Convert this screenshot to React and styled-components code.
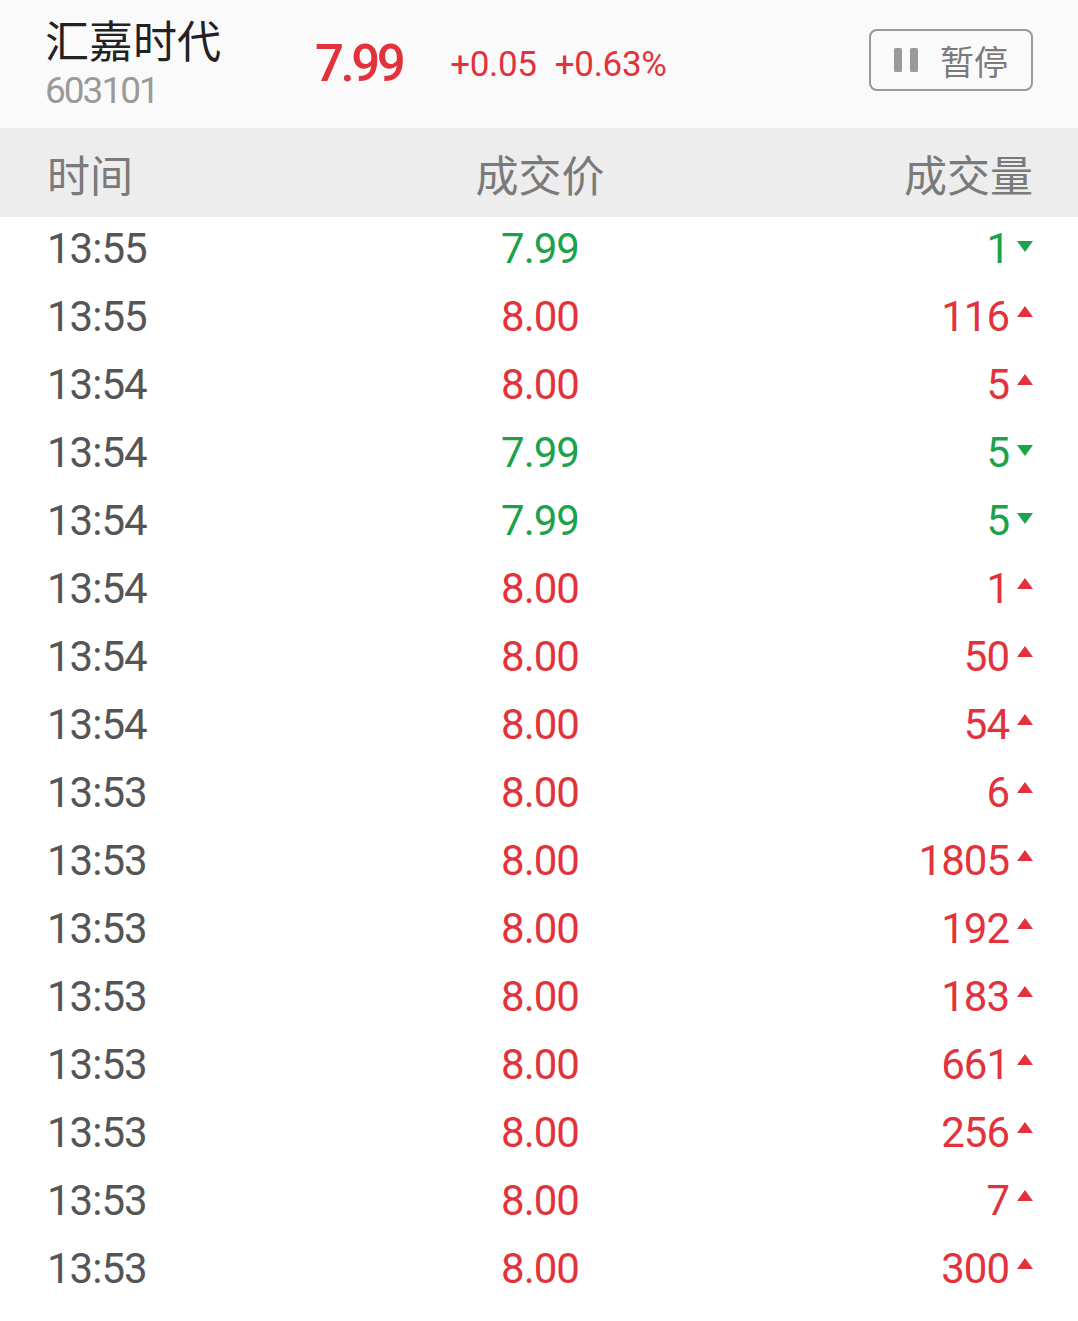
import React from "react";
import styled, { createGlobalStyle } from "styled-components";

const RED = "#e2333c";
const GREEN = "#1ca24b";

const GlobalStyle = createGlobalStyle`
  html, body {
    margin: 0;
    padding: 0;
    background: #ffffff;
    font-family: Roboto, "Noto Sans CJK SC", sans-serif;
  }
`;

const Page = styled.div`
  width: 1078px;
  height: 1321px;
  overflow: hidden;
  background: #ffffff;
`;

const Header = styled.div`
  height: 128px;
  background: #fafafa;
  display: flex;
  align-items: center;
  padding: 0 45px 0 45px;
  box-sizing: border-box;
`;

const NameBlock = styled.div`
  display: flex;
  flex-direction: column;
  width: 178px;
  margin-bottom: 4px;
`;

const Name = styled.div`
  font-family: "Noto Sans CJK SC", sans-serif;
  font-size: 44px;
  line-height: 52px;
  color: #222222;
`;

const Code = styled.div`
  font-size: 37px;
  line-height: 40px;
  color: #9a9a9a;
  letter-spacing: -2px;
  margin-top: 6px;
`;

const Price = styled.div`
  margin-left: 92px;
  font-size: 51px;
  font-weight: 500;
  letter-spacing: -3.5px;
  color: ${RED};
  margin-bottom: 2px;
`;

const Change = styled.div`
  margin-left: 48px;
  font-size: 35px;
  letter-spacing: -0.3px;
  color: ${RED};
  display: flex;
  gap: 18px;
`;

const PauseButton = styled.button`
  margin-left: auto;
  margin-bottom: 8px;
  width: 164px;
  height: 62px;
  box-sizing: border-box;
  border: 2.5px solid #9a9a9a;
  border-radius: 8px;
  background: transparent;
  display: flex;
  align-items: center;
  justify-content: center;
  gap: 22px;
  padding: 0;
  font-family: "Noto Sans CJK SC", sans-serif;
  font-size: 34px;
  color: #7a7a7a;
`;

const PauseIcon = () => (
  <svg width="24" height="24" viewBox="0 0 24 24">
    <rect x="0" y="0" width="8" height="24" rx="1.5" fill="#9a9a9a" />
    <rect x="16" y="0" width="8" height="24" rx="1.5" fill="#9a9a9a" />
  </svg>
);

const Grid = styled.div`
  display: grid;
  grid-template-columns: 1fr auto 1fr;
  align-items: center;
  padding: 0 45px 0 47px;
`;

const HeadRow = styled(Grid)`
  height: 89px;
  background: #ededed;
  font-family: "Noto Sans CJK SC", sans-serif;
  font-size: 43px;
  color: #7a7a7a;
`;

const Row = styled(Grid)`
  height: 68px;
  padding-bottom: 6px;
  box-sizing: border-box;
  font-size: 42px;
  letter-spacing: -1px;
`;

const Cell = styled.div`
  justify-self: ${({ $align }) => $align || "start"};
  color: ${({ $color }) => $color || "#555555"};
  display: flex;
  align-items: center;
`;

const Arrow = styled.svg`
  margin-left: 8px;
  margin-bottom: ${({ $up }) => ($up ? "10px" : "4px")};
`;

const Tri = ({ up, color }) => (
  <Arrow $up={up} width="16" height="11" viewBox="0 0 16 11">
    <path d={up ? "M8 0 L16 11 L0 11 Z" : "M0 0 L16 0 L8 11 Z"} fill={color} />
  </Arrow>
);

const trades = [
  ["13:55", "7.99", "1", false],
  ["13:55", "8.00", "116", true],
  ["13:54", "8.00", "5", true],
  ["13:54", "7.99", "5", false],
  ["13:54", "7.99", "5", false],
  ["13:54", "8.00", "1", true],
  ["13:54", "8.00", "50", true],
  ["13:54", "8.00", "54", true],
  ["13:53", "8.00", "6", true],
  ["13:53", "8.00", "1805", true],
  ["13:53", "8.00", "192", true],
  ["13:53", "8.00", "183", true],
  ["13:53", "8.00", "661", true],
  ["13:53", "8.00", "256", true],
  ["13:53", "8.00", "7", true],
  ["13:53", "8.00", "300", true],
  ["13:53", "7.99", "1", false],
];

const App = () => (
  <Page>
    <GlobalStyle />
    <Header>
      <NameBlock>
        <Name>汇嘉时代</Name>
        <Code>603101</Code>
      </NameBlock>
      <Price>7.99</Price>
      <Change>
        <span>+0.05</span>
        <span>+0.63%</span>
      </Change>
      <PauseButton>
        <PauseIcon />
        <span>暂停</span>
      </PauseButton>
    </Header>
    <HeadRow>
      <Cell $color="#7a7a7a">时间</Cell>
      <Cell $color="#7a7a7a" $align="center">成交价</Cell>
      <Cell $color="#7a7a7a" $align="end">成交量</Cell>
    </HeadRow>
    {trades.map(([time, price, vol, up], i) => {
      const color = up ? RED : GREEN;
      return (
        <Row key={i}>
          <Cell>{time}</Cell>
          <Cell $align="center" $color={color}>{price}</Cell>
          <Cell $align="end" $color={color}>
            {vol}
            <Tri up={up} color={color} />
          </Cell>
        </Row>
      );
    })}
  </Page>
);

export default App;
